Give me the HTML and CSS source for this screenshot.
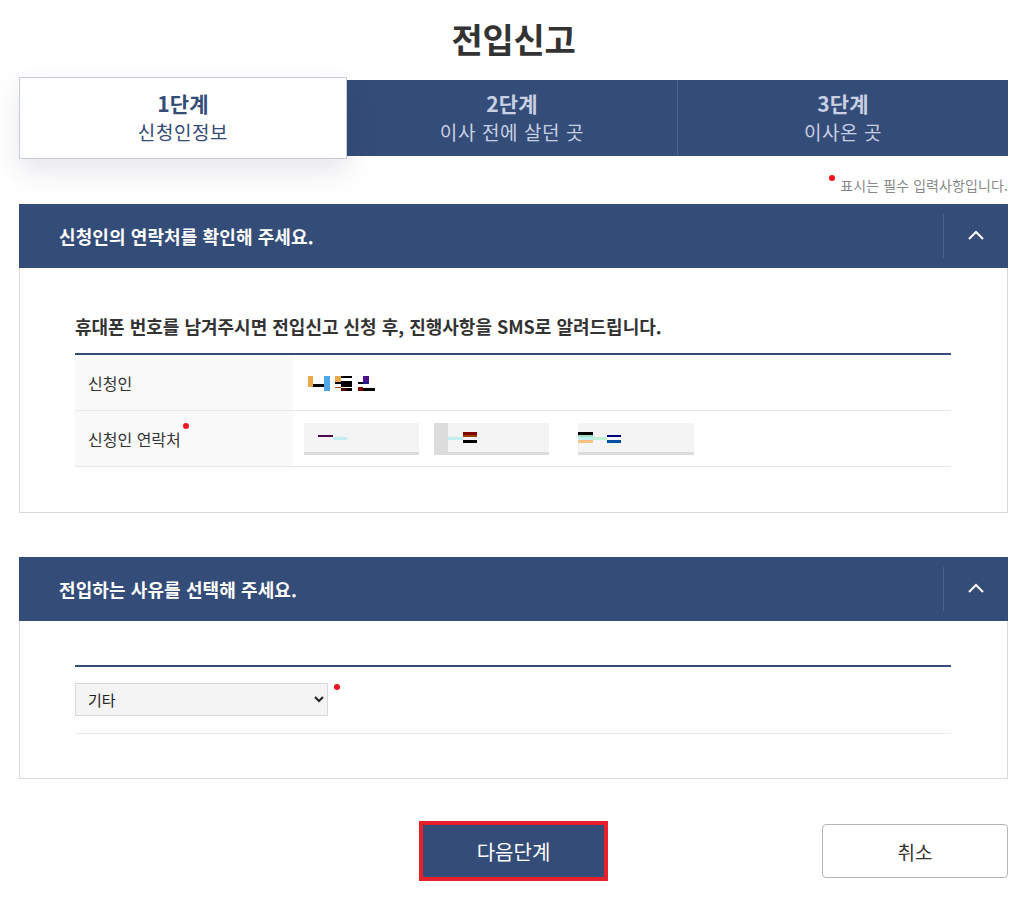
FILE: index.html
```html
<!DOCTYPE html>
<html lang="ko">
<head>
<meta charset="utf-8">
<title>전입신고</title>
<link rel="stylesheet" href="styles.css">
</head>
<body>
<div class="page">
  <h1 class="title">전입신고</h1>

  <div class="steps">
    <div class="step active">
      <strong>1단계</strong>
      <span>신청인정보</span>
    </div>
    <div class="step">
      <strong>2단계</strong>
      <span>이사 전에 살던 곳</span>
    </div>
    <div class="step">
      <strong>3단계</strong>
      <span>이사온 곳</span>
    </div>
  </div>

  <p class="req-note"><i class="dot"></i>표시는 필수 입력사항입니다.</p>

  <section class="panel">
    <div class="panel-head">
      <h2>신청인의 연락처를 확인해 주세요.</h2>
      <button class="toggle" type="button" aria-label="접기">
        <svg width="16" height="10" viewBox="0 0 16 10"><path d="M1 9 L8 2 L15 9" fill="none" stroke="#fff" stroke-width="2"/></svg>
      </button>
    </div>
    <div class="panel-body">
      <h3 class="sub">휴대폰 번호를 남겨주시면 전입신고 신청 후, 진행사항을 SMS로 알려드립니다.</h3>
      <div class="table">
        <div class="row">
          <div class="th">신청인</div>
          <div class="td">
            <svg class="redact" width="70" height="16" viewBox="0 0 70 16">
              <rect x="0" y="0" width="5" height="11" fill="#e8a84c"/>
              <rect x="5" y="8" width="11" height="3" fill="#000"/>
              <rect x="16" y="0" width="6" height="15" fill="#4fa6e8"/>
              <rect x="27" y="0" width="6" height="6" fill="#e8a84c"/>
              <rect x="33" y="0" width="11" height="2" fill="#000"/>
              <rect x="27" y="6" width="6" height="2" fill="#000"/>
              <rect x="33" y="5" width="11" height="6" fill="#000"/>
              <rect x="27" y="11" width="6" height="1" fill="#a04800"/>
              <rect x="33" y="12" width="6" height="3" fill="#4a0000"/>
              <rect x="39" y="12" width="5" height="3" fill="#000"/>
              <rect x="55" y="0" width="6" height="6" fill="#4b0f8c"/>
              <rect x="55" y="6" width="6" height="2" fill="#1a1a8c"/>
              <rect x="50" y="6" width="5" height="2" fill="#000"/>
              <rect x="50" y="11" width="5" height="4" fill="#800000"/>
              <rect x="55" y="12" width="12" height="3" fill="#000"/>
            </svg>
          </div>
        </div>
        <div class="row">
          <div class="th">신청인 연락처<i class="dot"></i></div>
          <div class="td phones">
            <div class="field">
              <svg width="115" height="29" viewBox="0 0 115 29">
                <rect x="14" y="12" width="15" height="2" fill="#4a0a4a"/>
                <rect x="29" y="14" width="14" height="3" fill="#c0f0f0"/>
              </svg>
            </div>
            <div class="field">
              <svg width="115" height="29" viewBox="0 0 115 29">
                <rect x="0" y="0" width="14" height="29" fill="#dcdcdc"/>
                <rect x="14" y="14" width="15" height="3" fill="#c0f0f0"/>
                <rect x="29" y="9" width="14" height="3" fill="#800000"/>
                <rect x="29" y="12" width="14" height="2" fill="#a04000"/>
                <rect x="29" y="17" width="14" height="3" fill="#000"/>
              </svg>
            </div>
            <div class="field gap">
              <svg width="116" height="29" viewBox="0 0 116 29">
                <rect x="0" y="9" width="15" height="3" fill="#000"/>
                <rect x="0" y="12" width="15" height="2" fill="#a0e0c0"/>
                <rect x="0" y="14" width="15" height="3" fill="#c0f0f0"/>
                <rect x="0" y="17" width="15" height="3" fill="#f8c080"/>
                <rect x="15" y="14" width="14" height="3" fill="#c0f0d8"/>
                <rect x="29" y="12" width="14" height="2" fill="#000080"/>
                <rect x="29" y="17" width="14" height="3" fill="#0050a0"/>
              </svg>
            </div>
          </div>
        </div>
      </div>
    </div>
  </section>

  <section class="panel second">
    <div class="panel-head">
      <h2>전입하는 사유를 선택해 주세요.</h2>
      <button class="toggle" type="button" aria-label="접기">
        <svg width="16" height="10" viewBox="0 0 16 10"><path d="M1 9 L8 2 L15 9" fill="none" stroke="#fff" stroke-width="2"/></svg>
      </button>
    </div>
    <div class="panel-body reason">
      <div class="reason-row">
        <select class="select">
          <option>기타</option>
        </select>
        <i class="dot"></i>
      </div>
    </div>
  </section>

  <div class="actions">
    <button class="btn-next" type="button">다음단계</button>
    <button class="btn-cancel" type="button">취소</button>
  </div>
</div>
</body>
</html>
```

FILE: styles.css
```css
* { box-sizing: border-box; }

body {
  margin: 0;
  background: #fff;
  font-family: "Noto Sans CJK KR", "Noto Sans", sans-serif;
  color: #333;
}

.page {
  width: 989px;
  margin-left: 19px;
}

.title {
  margin: 0;
  padding-top: 16px;
  height: 77px;
  text-align: center;
  font-size: 34px;
  line-height: 46px;
  font-weight: 700;
  color: #333;
  letter-spacing: -0.3px;
}

.steps {
  display: flex;
  align-items: center;
  height: 82px;
}

.step {
  flex: 1;
  height: 76px;
  background: #344c78;
  display: flex;
  flex-direction: column;
  align-items: center;
  justify-content: center;
  color: #c9d0e2;
}

.step + .step {
  border-left: 1px solid #4b6290;
}

.step strong {
  font-size: 21px;
  line-height: 30px;
  font-weight: 700;
  letter-spacing: 0.2px;
  margin-top: -3px;
}

.step span {
  font-size: 19px;
  line-height: 28px;
  font-weight: 400;
  letter-spacing: 0.6px;
}

.step.active {
  flex: 0 0 328px;
  height: 82px;
  background: #fff;
  border: 1px solid #c6ccd8;
  color: #344c78;
  box-shadow: 0 12px 28px rgba(40, 50, 80, 0.12);
  position: relative;
  z-index: 1;
}

.step.active + .step { border-left: 0; }

.req-note {
  margin: 0;
  height: 45px;
  padding-top: 17px;
  text-align: right;
  font-size: 14px;
  line-height: 19px;
  color: #888;
  letter-spacing: 0.1px;
}

.req-note .dot {
  vertical-align: top;
  margin-right: 5px;
  margin-top: -1px;
}

.dot {
  display: inline-block;
  width: 6px;
  height: 6px;
  border-radius: 50%;
  background: #f0141e;
}

.panel-head {
  height: 64px;
  background: #344c78;
  display: flex;
  align-items: center;
  justify-content: space-between;
  padding-left: 40px;
}

.panel-head h2 {
  margin: 0;
  font-size: 18px;
  font-weight: 700;
  color: #fff;
  letter-spacing: 0.1px;
}

.toggle {
  width: 65px;
  height: 44px;
  border: 0;
  border-left: 1px solid #4b6290;
  background: transparent;
  display: flex;
  align-items: center;
  justify-content: center;
  padding: 0 0 3px;
}

.panel-body {
  border: 1px solid #d9d9d9;
  border-top: 0;
  padding: 40px 56px 45px 55px;
}

.sub {
  margin: 0;
  height: 45px;
  font-size: 18px;
  line-height: 28px;
  padding-top: 4px;
  font-weight: 700;
  color: #333;
  letter-spacing: 0;
}

.table {
  border-top: 2px solid #344c78;
}

.row {
  display: flex;
  border-bottom: 1px solid #e8e8e8;
  height: 56px;
}

.th {
  flex: 0 0 218px;
  background: #f9f9f9;
  padding-left: 13px;
  display: flex;
  align-items: center;
  font-size: 16px;
  color: #333;
}

.th .dot {
  align-self: flex-start;
  margin-top: 12px;
  margin-left: 2px;
}

.td {
  flex: 1;
  display: flex;
  align-items: center;
  padding-left: 15px;
}

.redact {
  display: block;
  margin-top: 2px;
}

.phones {
  padding-left: 11px;
  gap: 15px;
}

.field {
  width: 115px;
  height: 32px;
  background: #f4f4f4;
  border-bottom: 3px solid #dcdcdc;
  margin-top: 1px;
}

.field svg { display: block; }

.field.gap {
  width: 116px;
  margin-left: 14px;
}

.panel.second {
  margin-top: 44px;
}

.reason {
  padding-top: 44px;
  padding-bottom: 44px;
}

.reason-row {
  border-top: 2px solid #344c78;
  border-bottom: 1px solid #ebebeb;
  padding: 16px 0 17px;
  display: flex;
  align-items: flex-start;
}

.select {
  width: 253px;
  height: 33px;
  background: #f4f4f4;
  border: 1px solid #d9d9d9;
  border-radius: 0;
  font-family: "Noto Sans CJK KR", sans-serif;
  font-size: 15px;
  color: #222;
  padding: 0 8px;
}

.reason-row .dot {
  margin-left: 6px;
  margin-top: 1px;
}

.actions {
  display: grid;
  grid-template-columns: 1fr auto 1fr;
  align-items: center;
  margin-top: 42px;
}

.btn-next {
  grid-column: 2;
  width: 189px;
  height: 60px;
  background: #344c78;
  border: 4px solid #e8202a;
  color: #fff;
  font-family: "Noto Sans CJK KR", sans-serif;
  font-size: 20px;
}

.btn-cancel {
  grid-column: 3;
  justify-self: end;
  width: 186px;
  height: 54px;
  background: #fff;
  border: 1px solid #b5b5b5;
  border-radius: 4px;
  color: #333;
  font-family: "Noto Sans CJK KR", sans-serif;
  font-size: 19px;
}
```
